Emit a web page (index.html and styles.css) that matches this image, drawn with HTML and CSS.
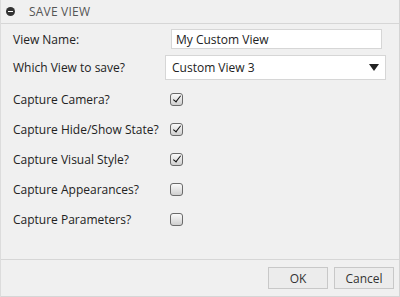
FILE: index.html
```html
<!DOCTYPE html>
<html lang="en">
<head>
<meta charset="UTF-8">
<title>Save View</title>
<link rel="stylesheet" href="styles.css">
</head>
<body>
<div class="dialog">
    <div class="titlebar">
        <span class="collapse"></span>
        <span class="title">SAVE VIEW</span>
    </div>
    <div class="content">
        <div class="row row--name">
            <label for="viewName">View Name:</label>
            <input type="text" id="viewName" value="My Custom View">
        </div>
        <div class="row row--select">
            <label>Which View to save?</label>
            <div class="select">
                <span>Custom View 3</span>
                <span class="arrow"></span>
            </div>
        </div>
        <div class="row">
            <label>Capture Camera?</label>
            <span class="check checked"></span>
        </div>
        <div class="row">
            <label>Capture Hide/Show State?</label>
            <span class="check checked"></span>
        </div>
        <div class="row">
            <label>Capture Visual Style?</label>
            <span class="check checked"></span>
        </div>
        <div class="row">
            <label>Capture Appearances?</label>
            <span class="check"></span>
        </div>
        <div class="row">
            <label>Capture Parameters?</label>
            <span class="check"></span>
        </div>
    </div>
    <div class="footer">
        <button type="button">OK</button>
        <button type="button">Cancel</button>
    </div>
</div>
</body>
</html>
```

FILE: styles.css
```css
body {
    margin: 0;
    padding: 0;
    background-color: #fff;
    font-family: "Open Sans", Arial, sans-serif;
    font-size: 12px;
    color: #222;
}
.dialog {
    width: 400px;
    height: 297px;
    box-sizing: border-box;
    background-color: #f0f0f0;
    border-left: 1px solid #dcdcdc;
    border-right: 1px solid #d4d4d4;
    display: flex;
    flex-direction: column;
}
.titlebar {
    height: 23px;
    display: flex;
    align-items: center;
    padding-left: 5px;
    border-bottom: 1px solid #d6d6d6;
}
.collapse {
    position: relative;
    width: 9px;
    height: 9px;
    border-radius: 50%;
    background-color: #333;
    margin-right: 14px;
}
.collapse::after {
    content: "";
    position: absolute;
    left: 2px;
    top: 4px;
    width: 5px;
    height: 1px;
    background-color: #fff;
}
.title {
    color: #555;
    font-size: 12px;
    letter-spacing: 0.2px;
}
.content {
    flex: 1;
    padding: 4px 12px 0 12px;
    border-bottom: 1px solid #d6d6d6;
}
.row {
    display: flex;
    align-items: center;
    height: 30px;
}
.row label {
    width: 157px;
}
.row--name {
    height: 22px;
}
.row--name label {
    width: 158px;
}
.row--name input {
    width: 211px;
    height: 20px;
    box-sizing: border-box;
    border: 1px solid #d6d6d6;
    padding: 0 4px;
    font-family: inherit;
    font-size: 12px;
    color: #222;
    margin-left: 0;
}
.row--select {
    height: 34px;
}
.row--select label {
    width: 152px;
}
.select {
    width: 221px;
    height: 25px;
    box-sizing: border-box;
    background-color: #fff;
    border: 1px solid #d6d6d6;
    display: flex;
    align-items: center;
    justify-content: space-between;
    padding: 0 6px;
}
.arrow {
    width: 0;
    height: 0;
    border-left: 5px solid transparent;
    border-right: 5px solid transparent;
    border-top: 7px solid #222;
}
.check {
    width: 11px;
    height: 11px;
    border: 1px solid #6a6a6a;
    border-radius: 3px;
    background: linear-gradient(#fafafa, #cfcfcf);
    position: relative;
}
.checked::after {
    content: "";
    position: absolute;
    left: 4px;
    top: 0px;
    width: 3px;
    height: 7px;
    border-right: 1.5px solid #111;
    border-bottom: 1.5px solid #111;
    transform: rotate(38deg);
}
.footer {
    height: 36px;
    display: flex;
    justify-content: flex-end;
    align-items: center;
    gap: 6px;
    padding-right: 5px;
    border-bottom: 1px solid #d6d6d6;
}
.footer button {
    width: 60px;
    height: 22px;
    background-color: #ececec;
    border: 1px solid #c8c8c8;
    font-family: inherit;
    font-size: 12px;
    color: #333;
    padding: 0;
}
```
